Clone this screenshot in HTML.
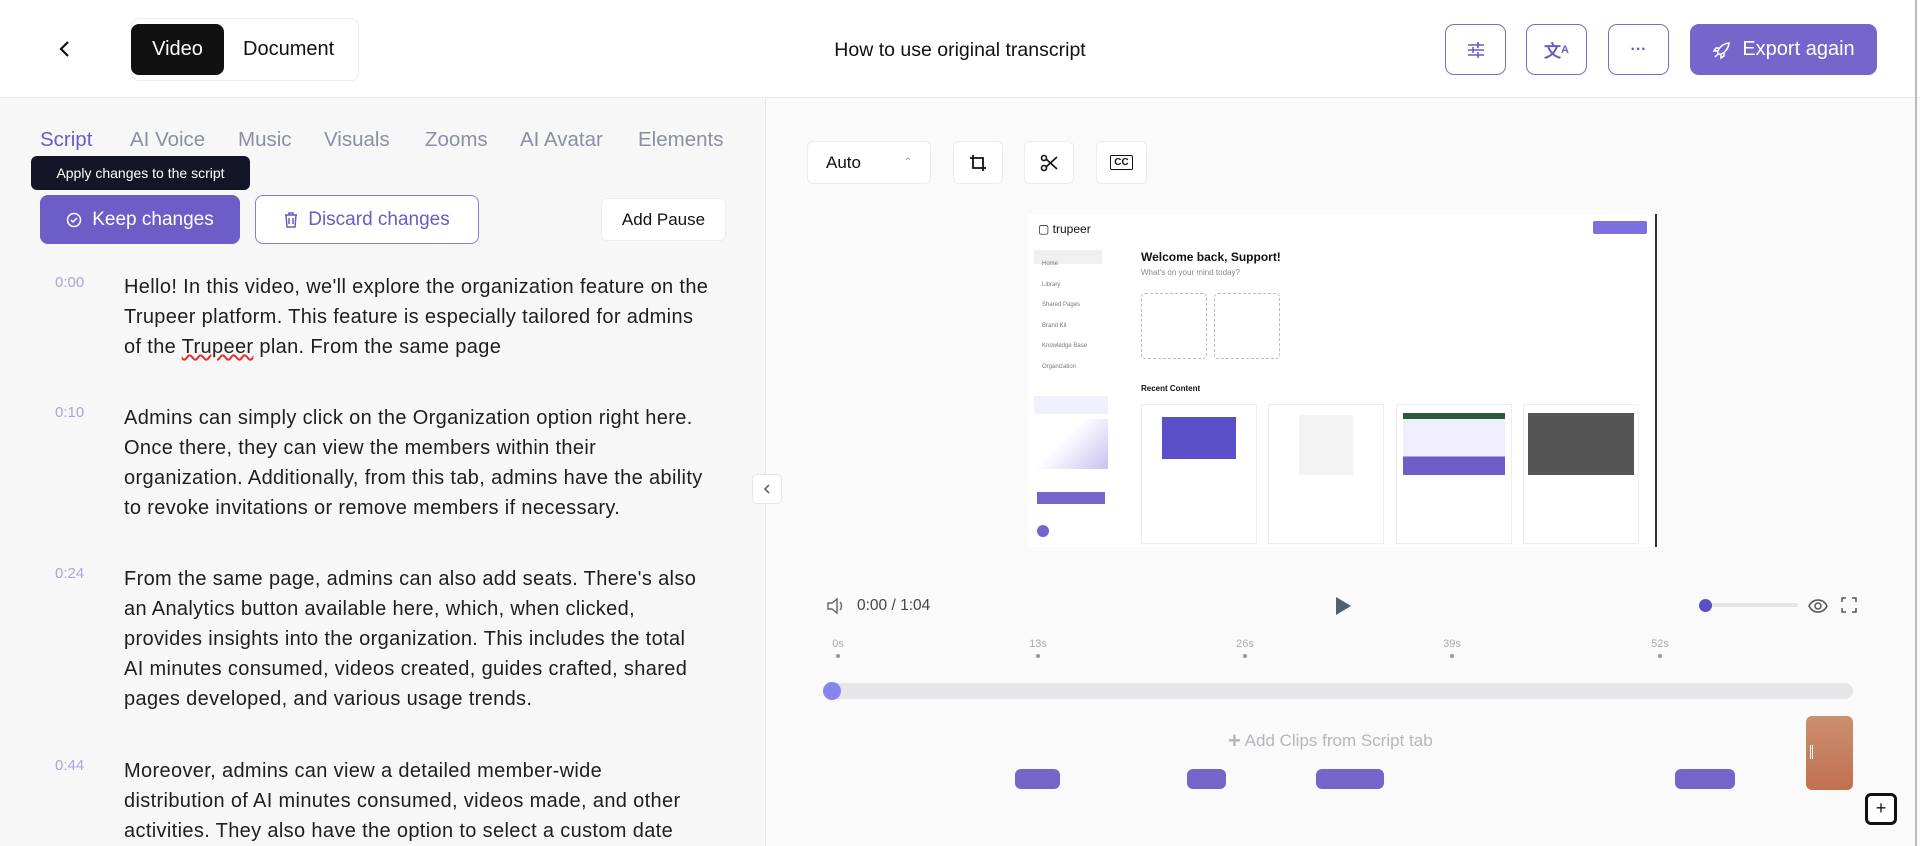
<!DOCTYPE html>
<html><head><meta charset="utf-8"><style>
*{box-sizing:border-box;margin:0;padding:0}
body{width:1920px;height:846px;overflow:hidden;font-family:"Liberation Sans",sans-serif;background:#fafafa;position:relative;color:#111}
.a{position:absolute}
.hdr{left:0;top:0;width:1920px;height:98px;background:#fff;border-bottom:1px solid #e6e6e6}
.ib{border:1.5px solid #7a6ccf;border-radius:9px;background:#fff;display:flex;align-items:center;justify-content:center}
.tab{top:128px;font-size:20.5px;color:#8a8fa3}
.ts{left:55px;font-size:15px;color:#a9a6d8}
.tx{left:124px;font-size:20px;letter-spacing:0.35px;line-height:30px;color:#1e1e1e;white-space:nowrap}
.tb{background:#fff;border:1px solid #ececec;border-radius:6px;display:flex;align-items:center;justify-content:center}
.tick{font-size:11px;color:#aaa;text-align:center;width:40px}
.dot{width:4px;height:4px;border-radius:2px;background:#999}
.clip{top:769px;height:20px;border-radius:6px;background:#7565cb}
.sc{font-size:6px;color:#777}
</style></head><body>
<div class="a hdr"></div>
<svg class="a" style="left:57px;top:39px" width="16" height="20" viewBox="0 0 16 20"><path d="M11 3L4 10l7 7" fill="none" stroke="#111" stroke-width="2.2"/></svg>
<div class="a" style="left:131px;top:18px;width:228px;height:63px;border:1px solid #eee;border-radius:8px;background:#fff"></div>
<div class="a" style="left:131px;top:24px;width:93px;height:51px;background:#111;border-radius:8px;color:#fff;font-size:20px;display:flex;align-items:center;justify-content:center">Video</div>
<div class="a" style="left:243px;top:38px;font-size:20px">Document</div>
<div class="a" style="left:760px;width:400px;top:39px;font-size:19.5px;text-align:center">How to use original transcript</div>
<div class="a ib" style="left:1445px;top:24px;width:61px;height:51px"><svg width="20" height="20" viewBox="0 0 20 20" stroke="#6a5cc0" stroke-width="1.6" fill="none"><path d="M2 5h16M2 10h16M2 15h16M12 2v6M7 7v6M12 12v6"/></svg></div>
<div class="a ib" style="left:1526px;top:24px;width:61px;height:51px;color:#6a5cc0;font-size:17px;font-weight:bold">文<span style="font-size:11px">A</span></div>
<div class="a ib" style="left:1608px;top:24px;width:61px;height:51px;color:#6a5cc0;font-size:16px;font-weight:bold">···</div>
<div class="a" style="left:1690px;top:24px;width:187px;height:51px;background:#7666cc;border-radius:9px;color:#fff;font-size:20px;display:flex;align-items:center;justify-content:center;gap:10px"><svg width="20" height="20" viewBox="0 0 20 20" fill="none" stroke="#fff" stroke-width="1.5"><path d="M6 14c-1-4 3-10 11-11-1 8-7 12-11 11zM6 14l-3 3M8 8H4l-2 3h4M12 12v4l-3 2v-4"/></svg>Export again</div>
<div class="a" style="left:0;top:99px;width:766px;height:747px;background:#f7f7f8;border-right:1px solid #e6e6e6"></div>
<div class="a" style="left:1915px;top:0;width:2px;height:846px;background:#bbb"></div>
<div class="a tab" style="left:40px;color:#6a5cc0">Script</div>
<div class="a tab" style="left:130px">AI Voice</div>
<div class="a tab" style="left:238px">Music</div>
<div class="a tab" style="left:324px">Visuals</div>
<div class="a tab" style="left:425px">Zooms</div>
<div class="a tab" style="left:520px">AI Avatar</div>
<div class="a tab" style="left:638px">Elements</div>
<div class="a" style="left:31px;top:156px;width:219px;height:34px;background:#141627;border-radius:6px;color:#fff;font-size:14px;display:flex;align-items:center;justify-content:center">Apply changes to the script</div>
<div class="a" style="left:40px;top:195px;width:200px;height:49px;background:#6d5dc6;border-radius:8px;color:#fff;font-size:19px;display:flex;align-items:center;justify-content:center;gap:10px"><svg width="16" height="16" viewBox="0 0 16 16" fill="none" stroke="#fff" stroke-width="1.5"><circle cx="8" cy="8" r="6.5"/><path d="M5 8l2 2 4-4"/></svg>Keep changes</div>
<div class="a" style="left:255px;top:195px;width:224px;height:49px;background:#fff;border:1.5px solid #8a7dd6;border-radius:8px;color:#6a5cc0;font-size:19px;display:flex;align-items:center;justify-content:center;gap:10px"><svg width="14" height="16" viewBox="0 0 14 16" fill="none" stroke="#6a5cc0" stroke-width="1.5"><path d="M1 3h12M5 3V1h4v2M2 3l1 12h8l1-12M5 6v6M9 6v6"/></svg>Discard changes</div>
<div class="a" style="left:601px;top:198px;width:125px;height:43px;background:#fff;border:1px solid #eee;border-radius:6px;font-size:17px;display:flex;align-items:center;justify-content:center">Add Pause</div>
<div class="a ts" style="top:274px">0:00</div>
<div class="a tx" style="top:272px">Hello! In this video, we'll explore the organization feature on the<br>Trupeer platform. This feature is especially tailored for admins<br>of the <span style="text-decoration:underline wavy #d33">Trupeer</span> plan. From the same page</div>
<div class="a ts" style="top:404px">0:10</div>
<div class="a tx" style="top:403px">Admins can simply click on the Organization option right here.<br>Once there, they can view the members within their<br>organization. Additionally, from this tab, admins have the ability<br>to revoke invitations or remove members if necessary.</div>
<div class="a ts" style="top:565px">0:24</div>
<div class="a tx" style="top:564px">From the same page, admins can also add seats. There's also<br>an Analytics button available here, which, when clicked,<br>provides insights into the organization. This includes the total<br>AI minutes consumed, videos created, guides crafted, shared<br>pages developed, and various usage trends.</div>
<div class="a ts" style="top:757px">0:44</div>
<div class="a tx" style="top:756px">Moreover, admins can view a detailed member-wide<br>distribution of AI minutes consumed, videos made, and other<br>activities. They also have the option to select a custom date</div>
<div class="a" style="left:752px;top:474px;width:30px;height:30px;background:#fff;border:1px solid #e6e6e6;border-radius:5px;display:flex;align-items:center;justify-content:center"><svg width="10" height="12"><path d="M7 2L3 6l4 4" fill="none" stroke="#555" stroke-width="1.5"/></svg></div>
<div class="a tb" style="left:807px;top:141px;width:124px;height:43px;justify-content:space-between;padding:0 18px;font-size:17px"><span>Auto</span><span style="font-size:10px;color:#999">⌃<br></span></div>
<div class="a tb" style="left:953px;top:141px;width:50px;height:43px"><svg width="18" height="18" viewBox="0 0 18 18" fill="none" stroke="#111" stroke-width="1.8"><path d="M4 1v13h13M1 4h13v13"/></svg></div>
<div class="a tb" style="left:1024px;top:141px;width:50px;height:43px"><svg width="18" height="18" viewBox="0 0 18 18" fill="none" stroke="#111" stroke-width="1.6"><circle cx="4" cy="4" r="2.5"/><circle cx="4" cy="14" r="2.5"/><path d="M6 5l11 10M6 13L17 3"/></svg></div>
<div class="a tb" style="left:1096px;top:141px;width:51px;height:43px"><div style="border:1.6px solid #111;border-radius:2px;font-size:10px;font-weight:bold;padding:1px 3px">CC</div></div>
<div class="a" style="left:1028px;top:214px;width:629px;height:333px;background:#fff;border-right:2px solid #333;overflow:hidden">
 <div class="a" style="left:10px;top:8px;font-size:12px">▢ trupeer</div>
 <div class="a" style="left:565px;top:7px;width:54px;height:13px;background:#7d6fe0;border-radius:2px"></div>
 <div class="a" style="left:6px;top:36px;width:68px;height:14px;background:#f0f0f0"></div>
 <div class="a sc" style="left:14px;top:40px;line-height:20.5px">Home<br>Library<br>Shared Pages<br>Brand Kit<br>Knowledge Base<br>Organization</div>
 <div class="a" style="left:6px;top:182px;width:74px;height:18px;background:#f0effc"></div>
 <div class="a" style="left:6px;top:205px;width:74px;height:50px;background:linear-gradient(135deg,#fff 40%,#c9c1f0)"></div>
 <div class="a" style="left:9px;top:278px;width:68px;height:12px;background:#7565cb"></div>
 <div class="a" style="left:9px;top:311px;width:12px;height:12px;border-radius:6px;background:#7565cb"></div>
 <div class="a" style="left:113px;top:36px;font-size:12px;font-weight:bold">Welcome back, Support!</div>
 <div class="a" style="left:113px;top:54px;font-size:8px;color:#888">What's on your mind today?</div>
 <div class="a" style="left:113px;top:79px;width:66px;height:66px;border:1px dashed #bbb;border-radius:4px"></div>
 <div class="a" style="left:186px;top:79px;width:66px;height:66px;border:1px dashed #bbb;border-radius:4px"></div>
 <div class="a" style="left:113px;top:170px;font-size:8px;font-weight:bold">Recent Content</div>
 <div class="a" style="left:113px;top:190px;width:116px;height:140px;border:1px solid #eee"><div style="margin:12px 20px;height:42px;background:#5b4fc9"></div></div>
 <div class="a" style="left:240px;top:190px;width:116px;height:140px;border:1px solid #eee"><div style="margin:10px 30px;height:60px;background:#f3f3f3"></div></div>
 <div class="a" style="left:368px;top:190px;width:116px;height:140px;border:1px solid #eee"><div style="margin:8px 6px;height:62px;background:linear-gradient(#2b5a3a 10%,#eef 10%,#eef 70%,#6d5dc6 70%)"></div></div>
 <div class="a" style="left:495px;top:190px;width:116px;height:140px;border:1px solid #eee"><div style="margin:8px 4px;height:62px;background:#555"></div></div>
</div>
<svg class="a" style="left:826px;top:597px" width="20" height="18" viewBox="0 0 20 18" fill="none" stroke="#666" stroke-width="1.4"><path d="M2 6h4l5-4v14l-5-4H2zM14 5c2 2 2 6 0 8"/></svg>
<div class="a" style="left:857px;top:597px;font-size:15.5px;color:#444">0:00 / 1:04</div>
<svg class="a" style="left:1334px;top:596px" width="18" height="20"><path d="M2 1l15 9-15 9z" fill="#555f6e"/></svg>
<div class="a" style="left:1706px;top:603px;width:92px;height:4px;background:#e4e4e4;border-radius:2px"></div>
<div class="a" style="left:1699px;top:599px;width:13px;height:13px;border-radius:7px;background:#5b4fc9"></div>
<svg class="a" style="left:1808px;top:597px" width="20" height="18" viewBox="0 0 20 18" fill="none" stroke="#555" stroke-width="1.5"><path d="M1 9c4-8 14-8 18 0-4 8-14 8-18 0z"/><circle cx="10" cy="9" r="3"/></svg>
<svg class="a" style="left:1841px;top:597px" width="16" height="16" fill="none" stroke="#555" stroke-width="1.5"><path d="M1 5V1h4M11 1h4v4M15 11v4h-4M5 15H1v-4"/></svg>
<div class="a tick" style="left:818px;top:638px">0s</div><div class="a dot" style="left:836px;top:654px"></div>
<div class="a tick" style="left:1018px;top:638px">13s</div><div class="a dot" style="left:1036px;top:654px"></div>
<div class="a tick" style="left:1225px;top:638px">26s</div><div class="a dot" style="left:1243px;top:654px"></div>
<div class="a tick" style="left:1432px;top:638px">39s</div><div class="a dot" style="left:1450px;top:654px"></div>
<div class="a tick" style="left:1640px;top:638px">52s</div><div class="a dot" style="left:1658px;top:654px"></div>
<div class="a" style="left:825px;top:683px;width:1028px;height:16px;background:#e6e6e8;border-radius:8px"></div>
<div class="a" style="left:823px;top:682px;width:18px;height:18px;border-radius:9px;background:#8b84f0"></div>
<div class="a" style="left:1228px;top:728px;font-size:17px;color:#b5b7bf"><b style="font-size:22px;vertical-align:-2px">+</b> Add Clips from Script tab</div>
<div class="a clip" style="left:1015px;width:45px"></div>
<div class="a clip" style="left:1187px;width:39px"></div>
<div class="a clip" style="left:1316px;width:68px"></div>
<div class="a clip" style="left:1675px;width:60px"></div>
<div class="a" style="left:1806px;top:716px;width:47px;height:74px;border-radius:6px;background:linear-gradient(#cc9070,#c0704f)"></div>
<div class="a" style="left:1810px;top:745px;width:3px;height:14px;border-left:1px solid #fff;border-right:1px solid #fff"></div>
<div class="a" style="left:1865px;top:793px;width:32px;height:32px;border:3px solid #111;border-radius:6px;background:#fff;font-size:18px;text-align:center;line-height:25px">+</div>
</body></html>
